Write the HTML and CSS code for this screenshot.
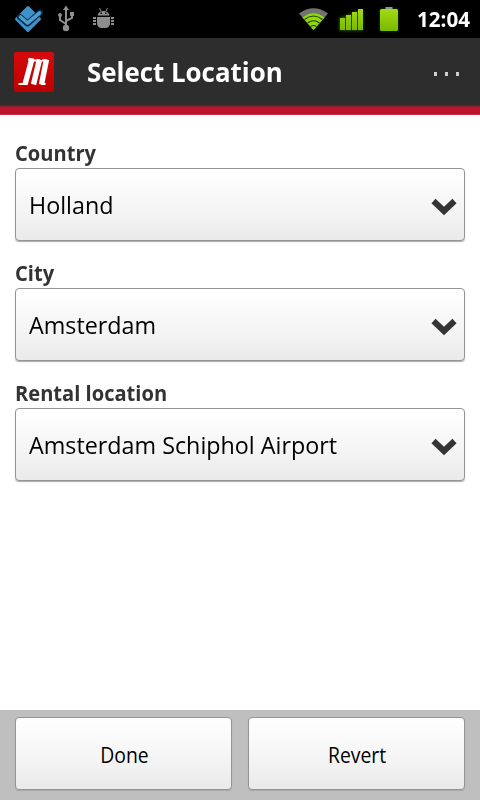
FILE: index.html
```html
<!DOCTYPE html>
<html lang="en">
<head>
<meta charset="utf-8">
<title>Select Location</title>
<link rel="stylesheet" href="styles.css">
</head>
<body>
<div class="status">
  <svg class="status-icons" width="130" height="38" viewBox="0 0 130 38">
    <path d="M28 7.500L39.500 19L28 30.500L16.500 19Z" fill="#3e91c9" stroke="#3e91c9" stroke-width="3" stroke-linejoin="round"/>
    <path d="M20 17L27.500 23.500L40 12.500" fill="none" stroke="#0a2a42" stroke-width="6" stroke-linejoin="round" stroke-linecap="round"/>
    <path d="M20.500 17L27.500 23L39.500 13" fill="none" stroke="#4b9ed2" stroke-width="3.600" stroke-linecap="round" stroke-linejoin="round"/>
    <g fill="none" stroke="#8e8e8e" stroke-width="2">
      <path d="M66 27V9M66 24L60 20V16M66 21L72 18V14"/>
    </g>
    <g fill="#8e8e8e"><path d="M66 5.500L69 10H63Z"/><circle cx="66" cy="28" r="3.2"/><circle cx="60" cy="15" r="2"/><path d="M70 12h4v4h-4z"/></g>
    <g fill="#8e8e8e">
      <path d="M97.500 15.500A6.200 6 0 0 1 109.500 15.500ZM97 17H110V23Q110 28 105 28H102Q97 28 97 23Z"/>
      <path d="M93 17h3v2h-3zM93 20h3v2h-3zM93 23h3v2h-3zM111 17h3v2h-3zM111 20h3v2h-3zM111 23h3v2h-3z"/>
      <path d="M99.500 8L101 11M107.500 8L106 11" stroke="#8e8e8e"/>
      <path d="M100.500 12.500h1.500v1.500h-1.500zM105 12.500h1.500v1.500h-1.500z" fill="#000"/>
    </g>
  </svg>
  <svg class="status-icons" width="110" height="38" viewBox="295 0 110 38">
    <defs>
      <linearGradient id="green" x2="0" y2="1"><stop stop-color="#a3da16"/><stop offset="1" stop-color="#78b900"/></linearGradient>
      <filter id="glow" x="-50%" y="-50%" width="200%" height="200%"><feGaussianBlur stdDeviation="1.600"/></filter>
    </defs>
    <g fill="#3c6500" filter="url(#glow)" opacity=".75"><path d="M303 17Q313.500 11 324 17L314 30ZM339 18L363 9V31H339ZM380 9H398V31H380Z"/></g>
    <path d="M299 13.500Q313.500 3 328 13.500L313.500 30Z" fill="#727272"/>
    <path d="M302.500 17.500Q313.500 9 324.500 17.500L313.500 30Z" fill="#91d70c"/>
    <path d="M304.500 19.500Q313.500 12.500 322.500 19.500M307.500 23Q313.500 18.500 319.500 23M310.500 26.500Q313.500 24.500 316.500 26.500" fill="none" stroke="#1e3d00" stroke-width="1.100"/>
    <path d="M340 18h5v12h-5zM346 15h5v15h-5zM352 12h5v18h-5zM358 9h5v21h-5z" fill="url(#green)"/>
    <path d="M385.500 7h7v3h-7z" fill="#8b9a8b"/>
    <rect x="380" y="9" width="18" height="22" rx="1.500" fill="url(#green)"/>
  </svg>
  <span class="clock">12:04</span>
</div>
<header class="header">
  <svg class="logo" width="40" height="40" viewBox="0 0 40 40">
    <defs><linearGradient id="red" x2="0" y2="1"><stop stop-color="#d60a0c"/><stop offset="1" stop-color="#be0000"/></linearGradient></defs>
    <rect width="40" height="40" rx="2" fill="url(#red)"/>
    <g fill="none" stroke="#fff">
      <path d="M18 6.500L11 32.500M25.500 7.500L19.500 32.500M32.500 7.500L27.500 32.500" stroke-width="5.400"/>
      <path d="M14 7.500H20M20 8.500H26M28 8.500H33M4.500 32H12M27 32H31.500" stroke-width="2.200"/>
    </g>
  </svg>
  <h1 class="title"><span>Select Location</span></h1>
  <div class="more"><i></i><i></i><i></i></div>
</header>
<main class="form">
  <div class="field"><div class="label"><span>Country</span></div>
    <div class="box select"><span>Holland</span><svg class="chevron" width="26" height="18" viewBox="0 0 26 18"><path d="M2.500 3L13 13L23.500 3" /></svg></div></div>
  <div class="field"><div class="label"><span>City</span></div>
    <div class="box select"><span>Amsterdam</span><svg class="chevron" width="26" height="18" viewBox="0 0 26 18"><path d="M2.500 3L13 13L23.500 3" /></svg></div></div>
  <div class="field"><div class="label"><span>Rental location</span></div>
    <div class="box select"><span>Amsterdam Schiphol Airport</span><svg class="chevron" width="26" height="18" viewBox="0 0 26 18"><path d="M2.500 3L13 13L23.500 3" /></svg></div></div>
</main>
<footer class="footer">
  <div class="box button"><span>Done</span></div>
  <div class="box button"><span>Revert</span></div>
</footer>
</body>
</html>
```

FILE: styles.css
```css
* { box-sizing: border-box; }
body {
  margin: 0;
  width: 480px;
  height: 800px;
  overflow: hidden;
  display: flex;
  flex-direction: column;
  background: #fff;
  color: #000;
  font-family: "Open Sans", "Noto Sans", sans-serif;
}
span { display: inline-block; white-space: nowrap; transform-origin: 0 50%; }
.status {
  height: 38px;
  flex: none;
  display: flex;
  align-items: center;
  background: #000;
}
.status-icons { display: block; flex: none; }
.status-icons + .status-icons { margin-left: 165px; }
.clock {
  margin-left: 12px;
  color: #fff;
  font-size: 21px;
  font-weight: 700;
  line-height: 38px;
  transform: scaleX(.98);
}
.header {
  height: 77px;
  flex: none;
  display: flex;
  align-items: center;
  padding: 0 21px 9px 14px;
  background: linear-gradient(#2d2d2d 0 67px, #5e1a27 67px, #a51a30 69px, #bf1230 71px, #bd122b 76px, #cc5064 77px);
}
.logo { flex: none; }
.title {
  flex: 1;
  margin: 0 0 0 33px;
  color: #fff;
  font-size: 26px;
  line-height: 36px;
  font-weight: 700;
}
.title span { transform: scaleX(.995); }
.more { display: flex; gap: 8px; margin-top: 4px; }
.more i { width: 3px; height: 4px; background: #cfcfcf; }
.form { flex: 1; padding: 23px 15px 0; }
.field { height: 120px; }
.label {
  height: 30px;
  line-height: 31px;
  font-size: 21px;
  font-weight: 700;
  color: #333;
}
.label span { transform: scaleX(.957); }
.box {
  height: 73px;
  border: 1px solid #949494;
  border-radius: 4px;
  background: linear-gradient(#fff, #f4f4f4 60%, #eaeaea);
  box-shadow: 0 1px 1px #aaa;
}
.select {
  display: flex;
  align-items: center;
  justify-content: space-between;
  padding: 0 7px 0 13px;
  font-size: 24px;
}
.select span { transform: scaleX(.971); }
.chevron { margin-top: 4px; flex: none; }
.chevron path { fill: none; stroke: #343434; stroke-width: 6; }
.footer {
  height: 90px;
  flex: none;
  display: flex;
  gap: 16px;
  padding: 7px 15px;
  background: #bfbfbf;
}
.button {
  flex: 1;
  display: flex;
  align-items: center;
  justify-content: center;
  font-size: 22px;
}
.button span { transform-origin: 50% 50%; transform: translateX(1px) scaleX(.88); }
```
